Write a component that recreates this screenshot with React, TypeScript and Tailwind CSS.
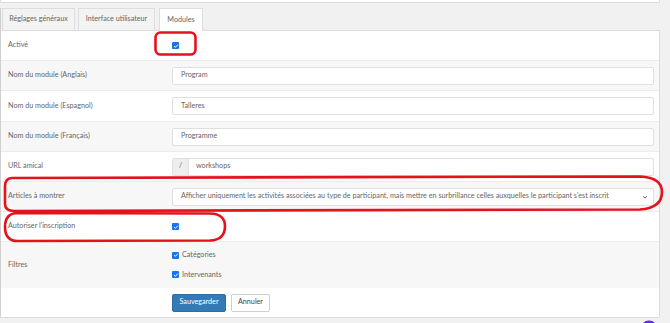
import type { ReactNode } from 'react';

function Check({ className = '' }: { className?: string }) {
  return (
    <span
      className={`inline-flex w-[7px] h-[7px] items-center justify-center rounded-[1px] bg-[#1a73e8] ${className}`}
    >
      <svg viewBox="0 0 8 8" className="w-[6px] h-[6px]">
        <path d="M1.5 4.2 L3.2 5.8 L6.5 2.2" fill="none" stroke="#fff" strokeWidth="1.3" />
      </svg>
    </span>
  );
}

function Row({
  label,
  children,
  gray,
  h = 'h-[30px]',
}: {
  label: string;
  children?: ReactNode;
  gray?: boolean;
  h?: string;
}) {
  return (
    <div
      className={`flex items-center ${h} border-t border-[#ececec] ${gray ? 'bg-[#f7f7f7]' : 'bg-white'}`}
    >
      <div className="w-[171px] pl-[7px] shrink-0">{label}</div>
      <div className="flex-1 pr-[5px] flex items-center">{children}</div>
    </div>
  );
}

function TextInput({ value }: { value: string }) {
  return (
    <div className="flex-1 h-[18px] flex items-center px-[8px] bg-white border border-[#e0e0e0] rounded-[2px]">
      {value}
    </div>
  );
}

export default function App() {
  return (
    <div className="relative w-[670px] h-[323px] overflow-hidden bg-[#f1f1f1] font-['Lato',sans-serif] text-[7.2px] text-[#666]">
      {/* top panel edge */}
      <div className="w-[660px] h-[3px] bg-white border-b border-r border-l border-[#dcdcdc]" />

      {/* tabs */}
      <div className="flex items-end mt-[5px] pl-[1px] h-[22px] border-l border-[#cfcfcf]">
        <div className="w-[73px] h-[22px] flex items-center justify-center border border-b-0 border-[#dedede] bg-[#f3f3f3]">
          Réglages généraux
        </div>
        <div className="ml-[3px] w-[77px] h-[22px] flex items-center justify-center border border-b-0 border-[#dedede] bg-[#f3f3f3]">
          Interface utilisateur
        </div>
        <div className="ml-[4px] w-[44px] h-[23px] flex items-center justify-center border border-b-0 border-[#dedede] bg-white relative z-10 -mb-px">
          Modules
        </div>
      </div>

      {/* panel */}
      <div className="w-[660px] bg-white border-t border-r border-b border-l border-[#dcdcdc] border-l-[#cfcfcf] rounded-br-[2px]">
        <div className="flex items-center h-[29px] bg-white">
          <div className="w-[171px] pl-[7px] shrink-0">Activé</div>
          <Check />
        </div>
        <Row label="Nom du module (Anglais)" gray>
          <TextInput value="Program" />
        </Row>
        <Row label="Nom du module (Espagnol)" h="h-[31px]">
          <TextInput value="Talleres" />
        </Row>
        <Row label="Nom du module (Français)" gray>
          <TextInput value="Programme" />
        </Row>
        <Row label="URL amical">
          <div className="flex-1 h-[18px] flex border border-[#e0e0e0] rounded-[2px]">
            <div className="w-[16px] flex items-center justify-center bg-[#eeeeee] border-r border-[#e0e0e0]">
              /
            </div>
            <div className="flex-1 flex items-center px-[7px]">workshops</div>
          </div>
        </Row>
        <Row label="Articles à montrer" gray>
          <div className="flex-1 h-[18px] flex items-center justify-between pl-[8px] pr-[5px] bg-white border border-[#e0e0e0] rounded-[2px]">
            <span>
              Afficher uniquement les activités associées au type de participant, mais mettre en surbrillance celles auxquelles le participant s'est inscrit
            </span>
            <svg viewBox="0 0 8 8" className="w-[6px] h-[6px]">
              <path d="M1.5 3 L4 5.5 L6.5 3" fill="none" stroke="#444" strokeWidth="1.2" />
            </svg>
          </div>
        </Row>
        <Row label="Autoriser l'inscription">
          <Check />
        </Row>
        <Row label="Filtres" gray h="h-[47px]">
          <div className="flex flex-col gap-[9px]">
            <div className="flex items-center gap-[3px]">
              <Check />
              <span>Catégories</span>
            </div>
            <div className="flex items-center gap-[3px]">
              <Check />
              <span>Intervenants</span>
            </div>
          </div>
        </Row>
        <div className="flex items-center h-[29px] pl-[171px] gap-[5px] bg-white">
          <button className="h-[18px] w-[54px] rounded-[2px] bg-[#337ab7] border border-[#2e6da4] text-white">
            Sauvegarder
          </button>
          <button className="h-[18px] w-[39px] rounded-[2px] bg-white border border-[#d0d0d0] text-[#444]">
            Annuler
          </button>
        </div>
      </div>

      {/* red annotations */}
      <svg className="absolute inset-0 pointer-events-none" width="670" height="323" viewBox="0 0 670 323">
        <rect x="155.5" y="32.5" width="40" height="22" rx="5" fill="none" stroke="#e3131e" strokeWidth="2.6" />
        <path
          d="M12 178 L640 176.5 Q662 177.5 662 192 Q662 208 640 209.5 L14 211 Q5 211 5 204 L5 186 Q5 178.5 12 178 Z"
          fill="none"
          stroke="#e3131e"
          strokeWidth="2.6"
        />
        <path
          d="M18 213 L210 213.5 Q225 214 225 226 Q225 240 210 240.5 L18 241 Q5 241 5 227 Q5 213 18 213 Z"
          fill="none"
          stroke="#e3131e"
          strokeWidth="2.6"
        />
        <circle cx="649" cy="329" r="8.5" fill="#5a2ee6" />
      </svg>
    </div>
  );
}
